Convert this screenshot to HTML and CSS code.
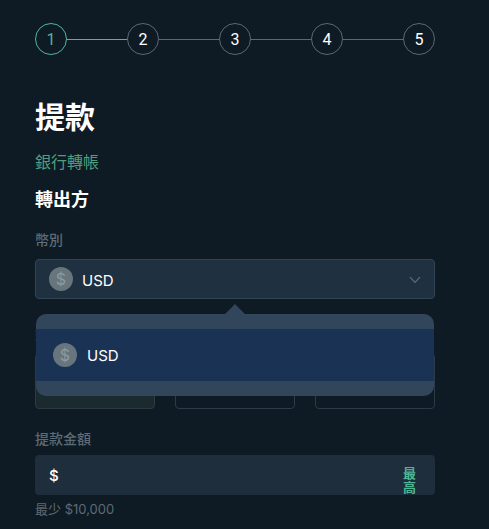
FILE: index.html
```html
<!DOCTYPE html>
<html lang="zh-Hant">

<head>
    <meta charset="UTF-8">
    <title>提款</title>
    <link rel="stylesheet" href="styles.css">
</head>

<body>
    <div class="page">
        <ol class="steps">
            <li class="step active">1</li>
            <li class="step-line active"></li>
            <li class="step">2</li>
            <li class="step-line"></li>
            <li class="step">3</li>
            <li class="step-line"></li>
            <li class="step">4</li>
            <li class="step-line"></li>
            <li class="step">5</li>
        </ol>

        <h1 class="title">提款</h1>
        <p class="method">銀行轉帳</p>
        <h2 class="section">轉出方</h2>

        <div class="field-currency">
            <label class="label">幣別</label>
            <div class="select">
                <span class="coin">
                    <svg viewBox="0 0 24 24" width="24" height="24"><text x="12" y="17.5" text-anchor="middle">$</text></svg>
                </span>
                <span class="select-text">USD</span>
                <svg class="chevron" viewBox="0 0 12 8" width="12" height="8">
                    <path d="M1 1.2 6 6.4 11 1.2" fill="none" stroke="#5d6f7d" stroke-width="1.2"/>
                </svg>
            </div>

            <div class="dropdown">
                <i class="dropdown-arrow"></i>
                <div class="dropdown-item">
                    <span class="coin">
                        <svg viewBox="0 0 24 24" width="24" height="24"><text x="12" y="17.5" text-anchor="middle">$</text></svg>
                    </span>
                    <span class="select-text">USD</span>
                </div>
            </div>
        </div>

        <label class="label label-hidden">銀行</label>
        <div class="cards">
            <div class="card selected"></div>
            <div class="card"></div>
            <div class="card"></div>
        </div>

        <label class="label label-amount">提款金額</label>
        <div class="amount">
            <span class="amount-sign">$</span>
            <button class="max-btn">最高</button>
        </div>
        <p class="hint">最少 $10,000</p>
    </div>
</body>

</html>
```

FILE: styles.css
```css
* {
    margin: 0;
    padding: 0;
    box-sizing: border-box;
}

html,
body {
    height: 100%;
    overflow: hidden;
}

body {
    background: #0e1a24;
    color: #fff;
    font-family: Inter, "Noto Sans CJK TC", sans-serif;
}

ol li {
    list-style: none;
}

.page {
    width: 400px;
    margin-left: 35px;
    padding-top: 23px;
}

.steps {
    display: flex;
    align-items: center;
}

.step {
    width: 32px;
    height: 32px;
    border: 1px solid #5b6973;
    border-radius: 50%;
    display: flex;
    align-items: center;
    justify-content: center;
    font-family: Roboto, sans-serif;
    font-size: 16px;
    font-weight: 400;
}

.step.active {
    border-color: #4fb795;
    color: #4fb795;
}

.step-line {
    flex: 1;
    height: 1px;
    background: #5b6973;
}

.step-line.active {
    background: #4fb795;
}

.title {
    margin-top: 42px;
    font-size: 30px;
    line-height: 40px;
    font-weight: 700;
}

.method {
    margin-top: 13px;
    font-size: 16px;
    line-height: 24px;
    color: #4f9e80;
}

.section {
    margin-top: 14px;
    font-size: 18px;
    line-height: 24px;
    font-weight: 700;
}

.field-currency {
    position: relative;
    margin-top: 19px;
}

.label {
    display: block;
    font-size: 14px;
    line-height: 18px;
    font-weight: 500;
    color: #5e6b74;
}

.select {
    margin-top: 10px;
    height: 40px;
    display: flex;
    align-items: center;
    padding: 0 13px;
    background: #1f3040;
    border: 1px solid #304452;
    border-radius: 4px;
}

.coin {
    width: 24px;
    height: 24px;
    flex: none;
    border-radius: 50%;
    background: #68757d;
}

.coin svg {
    display: block;
}

.coin text {
    font-family: Inter, sans-serif;
    font-size: 16px;
    fill: #8f9a9f;
}

.select-text {
    margin-left: 9px;
    margin-top: 2px;
    font-size: 15px;
    font-weight: 400;
}

.chevron {
    margin-left: auto;
    margin-top: 2px;
}

/* 下拉菜单盖在表单上面 */
.dropdown {
    position: absolute;
    z-index: 2;
    top: 83px;
    left: 1px;
    right: 1px;
    padding: 15px 0;
    background: #32465b;
    border-radius: 10px;
}

.dropdown-arrow {
    position: absolute;
    top: -7px;
    left: 192px;
    width: 14px;
    height: 14px;
    background: #32465b;
    transform: rotate(45deg);
}

.dropdown-item {
    position: relative;
    height: 52px;
    display: flex;
    align-items: center;
    padding-left: 17px;
    background: #1a3254;
}

.dropdown-item .select-text {
    margin-left: 10px;
    margin-top: 0;
}

.label-hidden {
    margin-top: 26px;
}

.cards {
    margin-top: 10px;
    display: grid;
    grid-template-columns: repeat(3, 120px);
    gap: 20px;
}

.card {
    height: 56px;
    border: 1px solid #2c3b47;
    border-radius: 4px;
}

.card.selected {
    background: #1a2a2e;
    border-color: #2a3b42;
}

.label-amount {
    margin-top: 21px;
}

.amount {
    margin-top: 7px;
    height: 40px;
    display: flex;
    align-items: center;
    justify-content: space-between;
    padding: 0 19px 0 14px;
    background: #1e2e3c;
    border-radius: 4px;
}

.amount-sign {
    font-size: 15px;
    font-weight: 500;
}

.max-btn {
    width: 13px;
    margin-top: 10px;
    border: 0;
    background: none;
    color: #4fb795;
    font-family: "Noto Sans CJK TC", sans-serif;
    font-size: 13px;
    line-height: 14px;
    font-weight: 700;
}

.hint {
    margin-top: 6px;
    font-size: 13px;
    line-height: 16px;
    color: #5e6b74;
}
```
